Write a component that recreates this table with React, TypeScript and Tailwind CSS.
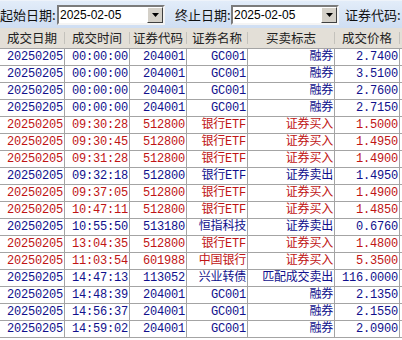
import React from "react";

type Row = [boolean, string, string, string, string, string];

const rows: Row[] = [
  [false, "00:00:00", "204001", "GC001", "融券", "2.7400"],
  [false, "00:00:00", "204001", "GC001", "融券", "3.5100"],
  [false, "00:00:00", "204001", "GC001", "融券", "2.7600"],
  [false, "00:00:00", "204001", "GC001", "融券", "2.7150"],
  [true, "09:30:28", "512800", "银行ETF", "证券买入", "1.5000"],
  [true, "09:30:45", "512800", "银行ETF", "证券买入", "1.4950"],
  [true, "09:31:28", "512800", "银行ETF", "证券买入", "1.4900"],
  [false, "09:32:18", "512800", "银行ETF", "证券卖出", "1.4950"],
  [true, "09:37:05", "512800", "银行ETF", "证券买入", "1.4900"],
  [true, "10:47:11", "512800", "银行ETF", "证券买入", "1.4850"],
  [false, "10:55:50", "513180", "恒指科技", "证券卖出", "0.6760"],
  [true, "13:04:35", "512800", "银行ETF", "证券买入", "1.4800"],
  [true, "11:03:54", "601988", "中国银行", "证券买入", "5.3500"],
  [false, "14:47:13", "113052", "兴业转债", "匹配成交卖出", "116.0000"],
  [false, "14:48:39", "204001", "GC001", "融券", "2.1350"],
  [false, "14:56:37", "204001", "GC001", "融券", "2.1550"],
  [false, "14:59:02", "204001", "GC001", "融券", "2.0900"],
];

const headers = ["成交日期", "成交时间", "证券代码", "证券名称", "买卖标志", "成交价格"];

function DateBox({ value }: { value: string }) {
  return (
    <div className="flex h-[20px] w-[108px] items-center border-2 border-t-[#7b7b7b] border-l-[#7b7b7b] border-b-[#f4f4f4] border-r-[#f4f4f4] bg-white">
      <span className="flex-1 pl-[1px] text-[12px] leading-none text-black [font-family:'Liberation_Sans',sans-serif]">
        {value}
      </span>
      <div className="flex h-[16px] w-[16px] items-center justify-center border border-t-[#ffffff] border-l-[#ffffff] border-b-[#404040] border-r-[#404040] bg-[#d4d0c8]">
        <svg width="7" height="4" viewBox="0 0 7 4">
          <polygon points="0,0 7,0 3.5,4" fill="#000" />
        </svg>
      </div>
    </div>
  );
}

export default function App() {
  return (
    <div className="h-[340px] w-[402px] overflow-hidden bg-white">
      <div className="flex h-[28px] items-center border-t border-t-[#eef3fa] bg-gradient-to-b from-[#e2ecf9] to-[#cfdef2] text-[13px] text-[#111] [font-family:'Noto_Sans_CJK_SC',sans-serif]">
        <span className="w-[57px] whitespace-nowrap leading-none">起始日期:</span>
        <DateBox value="2025-02-05" />
        <span className="ml-[10px] w-[56px] whitespace-nowrap leading-none">终止日期:</span>
        <DateBox value="2025-02-05" />
        <span className="ml-[6px] whitespace-nowrap leading-none">证券代码:</span>
      </div>
      <div className="grid h-[21px] grid-cols-[65px_65px_57px_61px_87px_65px] border-b border-b-[#a4a4a4] bg-[#e3dfd7] text-[12.5px] text-[#222] [font-family:'Noto_Sans_CJK_SC',sans-serif]">
        {headers.map((h) => (
          <div key={h} className="flex items-center">
            <span className="flex-1 text-center leading-none">{h}</span>
            <div className="h-[12px] w-px bg-[#c4c2bc]" />
          </div>
        ))}
      </div>
      {rows.map((r, i) => (
        <div
          key={i}
          className={`grid h-[17px] grid-cols-[65px_65px_57px_61px_87px_65px] border-b border-b-[#a4a4a4] text-[12px] leading-[16px] tracking-[-0.2px] [font-family:'Liberation_Mono','Noto_Sans_CJK_SC',monospace] ${
            r[0] ? "text-[#c01414]" : "text-[#10108c]"
          }`}
        >
          {["20250205", r[1], r[2], r[3], r[4], r[5]].map((c, j) => (
            <div
              key={j}
              className="h-[16px] overflow-hidden whitespace-nowrap border-r border-r-[#a4a4a4] pr-[1px] text-right"
            >
              {c}
            </div>
          ))}
        </div>
      ))}
    </div>
  );
}
